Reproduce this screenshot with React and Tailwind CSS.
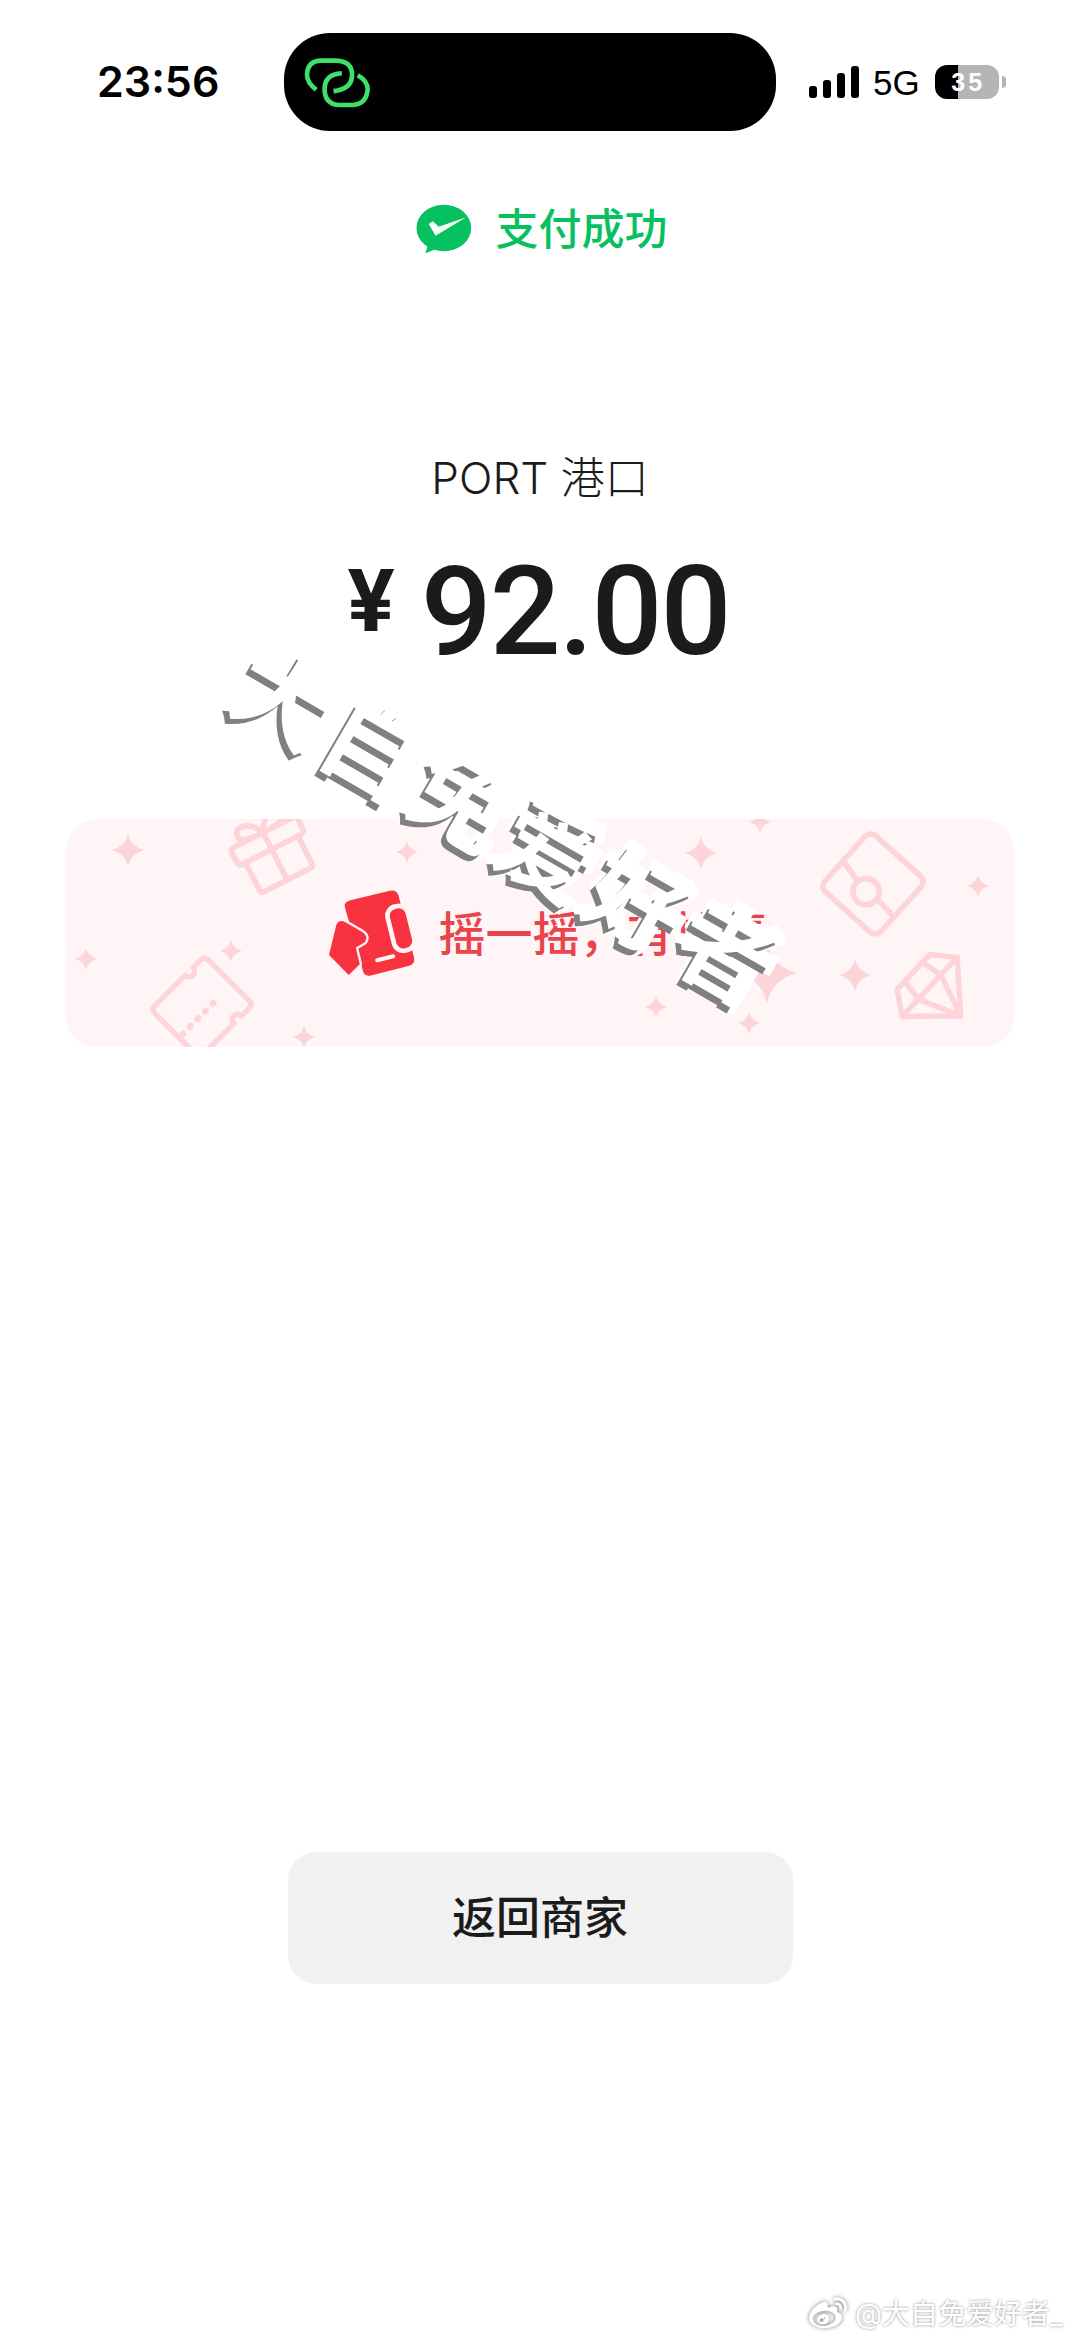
import { FaWeibo } from "react-icons/fa";

const CJK = "font-['Inter','Noto_Sans_CJK_SC',sans-serif]";

const stars = [
  [62, 31, 16], [341, 33, 11], [20, 140, 11], [165, 132, 11], [238, 218, 11],
  [635, 34, 16], [694, 3, 11], [701, 154, 30], [590, 188, 11], [683, 204, 11],
  [789, 156, 16], [912, 67, 11],
];

const Star = ({ x, y, r }) => {
  const k = r * 0.2;
  return (
    <path
      d={`M${x} ${y - r}Q${x + k} ${y - k} ${x + r} ${y}Q${x + k} ${y + k} ${x} ${y + r}Q${x - k} ${y + k} ${x - r} ${y}Q${x - k} ${y - k} ${x} ${y - r}Z`}
      fill="#fdd5d8"
    />
  );
};

const BannerArt = () => (
  <svg className="absolute inset-0" width="949" height="228" viewBox="0 0 949 228">
    {stars.map(([x, y, r]) => (
      <Star key={`${x}-${y}`} x={x} y={y} r={r} />
    ))}
    <g fill="none" stroke="#fdd5d8" strokeWidth="6" strokeLinejoin="round" strokeLinecap="round">
      {/* gift */}
      <g transform="translate(204 27) rotate(-27) scale(0.95)">
        <rect x="-39" y="-16" width="78" height="20" rx="4" />
        <path d="M-31 4V36Q-31 40 -27 40H27Q31 40 31 36V4M0 -16V40" />
        <path d="M0 -16C-8 -34 -26 -36 -26 -24C-26 -16 -12 -16 0 -16C12 -16 26 -16 26 -24C26 -36 8 -34 0 -16" />
      </g>
      {/* ticket */}
      <g transform="translate(136 188) rotate(45) scale(0.9)">
        <path d="M-32 -42H32Q38 -42 38 -36V-24C30 -24 30 -12 38 -12V36Q38 42 32 42H-32Q-38 42 -38 36V-12C-30 -12 -30 -24 -38 -24V-36Q-38 -42 -32 -42Z" />
        <path d="M6 -12V40" strokeDasharray="1 11" strokeWidth="7" />
      </g>
      {/* card with circle */}
      <g transform="translate(807 65) rotate(42) scale(0.94)">
        <rect x="-40" y="-40" width="80" height="80" rx="8" />
        <circle cx="0" cy="11" r="14" />
        <path d="M-40 3L-14 9M14 9L40 11" />
      </g>
      {/* diamond */}
      <g transform="translate(869 173) rotate(-47) scale(0.92)">
        <path d="M-26 -32H26L44 -8L0 38L-44 -8Z" />
        <path d="M-44 -8H44M-14 -32L-18 -8L0 38L18 -8L14 -32" />
      </g>
    </g>
  </svg>
);

const ShakeIcon = () => (
  <svg width="86" height="86" viewBox="838 268 257 257">
    <path d="M905 298L1020 270Q1040 266 1046 285L1092 470Q1096 488 1078 494L960 524Q942 527 938 505L885 318Q882 303 905 298Z" fill="#f8333f" />
    <rect x="1022" y="315" width="62" height="135" rx="28" transform="rotate(-14 1053 382)" fill="#f8333f" stroke="#fff5f6" strokeWidth="14" />
    <path d="M838 462L860 372Q868 354 886 364L935 392Q958 406 945 424L918 440L930 490L897 522Z" fill="#f8333f" stroke="#fff5f6" strokeWidth="14" paintOrder="stroke" strokeLinejoin="round" />
    <path d="M982 478L1030 466" stroke="#fff5f6" strokeWidth="12" strokeLinecap="round" />
  </svg>
);

const LinkIcon = () => (
  <svg width="68" height="53" viewBox="40 30 205 160" fill="none" stroke="#3ee06a" strokeWidth="14" strokeLinecap="butt" strokeLinejoin="round">
    <path d="M80 132Q52 110 52 88Q52 45 95 44L140 44Q190 46 188 90Q186 130 132 136" />
    <path d="M205 88Q235 105 235 130Q232 175 190 178L150 178Q105 175 105 130Q105 85 157 82" />
  </svg>
);

const WeChatPay = () => (
  <svg width="56" height="50" viewBox="50 40 167 150">
    <ellipse cx="133" cy="112" rx="82" ry="70" fill="#07c160" />
    <path d="M84 165L78 188L108 176Z" fill="#07c160" />
    <path d="M88 100L100 92L118 108L200 80L108 135Z" fill="#fff" />
  </svg>
);

const App = () => {
  return (
    <div className={`relative flex h-[2341px] w-[1080px] flex-col overflow-hidden bg-white ${CJK}`}>
      {/* status bar */}
      <div className="mt-[33px] flex h-[98px] items-center font-['Liberation_Sans',sans-serif] text-black">
        <div className="w-[284px] pb-[2px] pl-[97px] font-['Inter',sans-serif] text-[43px] font-semibold">23:56</div>
        <div className="flex h-[98px] w-[492px] items-center rounded-[46px] bg-black pl-[19px]">
          <LinkIcon />
        </div>
        <div className="flex items-center pl-[33px]">
          <div className="flex h-[32px] items-end gap-[6px]">
            <div className="h-[12px] w-[8px] rounded-[3px] bg-black" />
            <div className="h-[18px] w-[8px] rounded-[3px] bg-black" />
            <div className="h-[25px] w-[8px] rounded-[3px] bg-black" />
            <div className="h-[32px] w-[8px] rounded-[3px] bg-black" />
          </div>
          <div className="ml-[14px] text-[35px] font-normal leading-none">5G</div>
          <div className="ml-[15px] flex h-[34px] w-[64px] items-center justify-center rounded-[12px] bg-[linear-gradient(90deg,#000_0,#000_23px,#b5b5b5_23px)] pl-[3px] text-[25px] font-bold leading-none tracking-[3px] text-white">
            35
          </div>
          <div className="ml-[3px] h-[12px] w-[4px] rounded-r-full bg-[#b5b5b5]" />
        </div>
      </div>

      {/* result */}
      <div className="mt-[73px] flex h-[50px] items-center justify-center gap-[24px] pl-[3px]">
        <WeChatPay />
        <span className="text-[43px] font-medium leading-none text-[#07c160]">支付成功</span>
      </div>
      <div className="mt-[194px] h-[60px] text-center text-[44px] font-light leading-[60px] text-[#1b1b1b]">PORT 港口</div>
      <div className="mt-[39px] flex h-[130px] items-start justify-center pr-[3px] font-['Roboto',sans-serif] text-[#1b1b1b]">
        <span className="mr-[26px] mt-[10px] text-[88px] font-bold leading-[88px]">¥</span>
        <span className="text-[125px] font-medium leading-[130px] tracking-[-2px]">92.00</span>
      </div>

      {/* shake banner */}
      <div className="relative mx-[66px] mt-[142px] flex h-[228px] items-center justify-center gap-[24px] overflow-hidden rounded-[30px] bg-[#fff5f6] pl-[16px]">
        <BannerArt />
        <div className="relative"><ShakeIcon /></div>
        <span className="relative text-[47px] font-medium leading-none text-[#e9444c]">摇一摇，有惊喜</span>
      </div>

      <button className="mx-auto mt-[805px] h-[132px] w-[505px] rounded-[28px] bg-[#f1f1f1] text-[44px] font-medium text-[#1b1b1b]">
        返回商家
      </button>

      {/* diagonal watermark */}
      <div className="absolute left-[506px] top-[828px] -translate-x-1/2 -translate-y-1/2 rotate-[30deg] whitespace-nowrap text-[98px] font-bold leading-none tracking-[4px] text-white [-webkit-text-stroke:10px_white] [paint-order:stroke_fill] [text-shadow:-2px_7px_0_#808080]">
        大自免爱好者
      </div>

      {/* weibo mark */}
      <div className="absolute left-[808px] top-[2295px] flex h-[38px] items-center gap-[7px] text-[28px] leading-[38px] text-white [text-shadow:0_0_3px_#8a8a8a]">
        <FaWeibo className="h-[38px] w-[40px] text-white drop-shadow-[0_0_2px_#777]" />
        <span>@大自免爱好者_</span>
      </div>
    </div>
  );
};

export default App;
